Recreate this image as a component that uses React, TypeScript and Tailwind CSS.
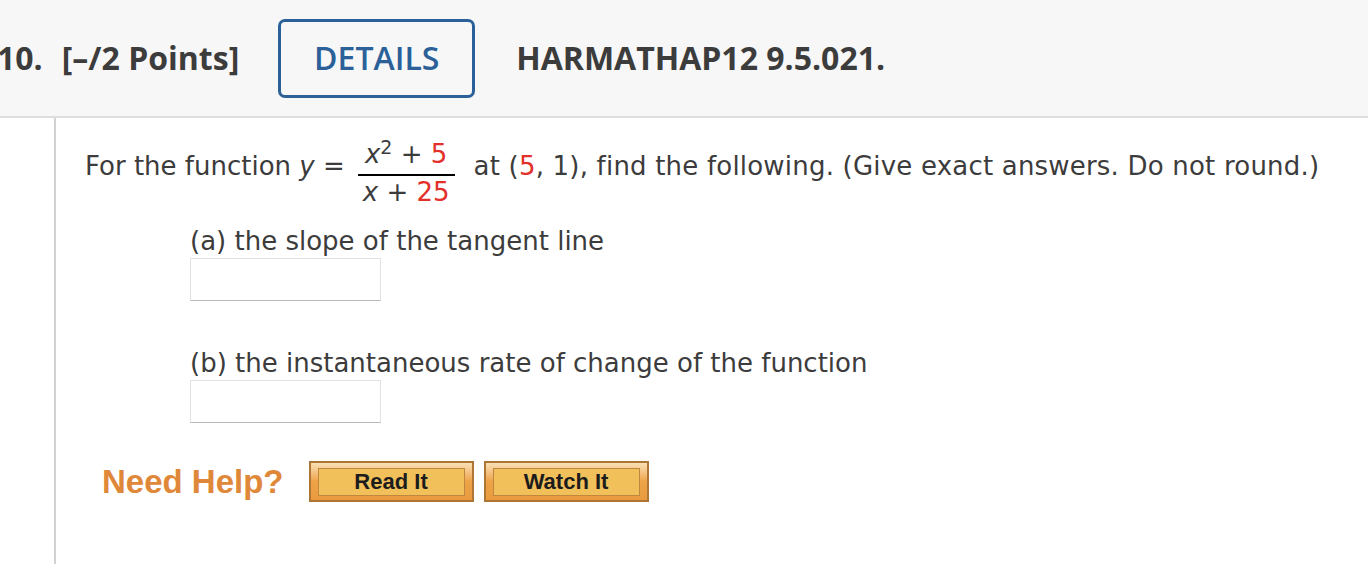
import React from "react";

const body = "font-['DejaVu_Sans',Verdana,sans-serif]";

function HelpButton({ label, className }: { label: string; className?: string }) {
  return (
    <button
      className={`h-[41px] w-[165px] border-2 border-[#ad7536] bg-gradient-to-b from-[#f9e0b4] via-[#eea347] to-[#e99a3e] pt-[5px] pb-[4px] px-[7px] ${className ?? ""}`}
    >
      <span className="flex h-full w-full items-center justify-center border border-[#c0883f] bg-[#f2c05b] font-['Liberation_Sans',Arial,sans-serif] text-[22px] font-bold leading-none text-[#1c1c1c]">
        {label}
      </span>
    </button>
  );
}

function AnswerBox() {
  return (
    <div className="h-[43px] w-[191px] border border-[#e2e2e2] border-b-[#b9b9b9] bg-white" />
  );
}

export default function App() {
  return (
    <div className="h-[564px] w-[1368px] overflow-hidden bg-white text-[#3c3c3c]">
      {/* question header */}
      <div className="flex h-[118px] items-center border-b-2 border-[#dedede] bg-[#f7f7f7] font-['Open_Sans',sans-serif] text-[32px] font-bold">
        <span className="ml-[-3px]">10.</span>
        <span className="ml-[19px]">[–/2 Points]</span>
        <div className="ml-[39px] flex h-[79px] w-[197px] items-center justify-center rounded-[7px] border-[3px] border-[#2b6198] font-semibold text-[#2b6198]">
          DETAILS
        </div>
        <span className="ml-[41px]">HARMATHAP12 9.5.021.</span>
      </div>

      <div className="flex h-[446px]">
        <div className="w-[54px] shrink-0" />
        <div className={`flex-1 border-l-2 border-[#d2d2d2] pl-[29px] ${body} text-[26px]`}>
          {/* prompt with fraction */}
          <div className="mt-[16px] flex items-start">
            <span className="mt-[13px] leading-[39px]">
              For the function <i>y</i> =
            </span>
            <span className="ml-[13px] mr-[19px] flex flex-col items-center">
              <span className="px-[5px] leading-[40px]">
                <i>x</i>
                <sup className="text-[19px]">2</sup> + <span className="text-[#e3302a]">5</span>
              </span>
              <span className="h-[2px] w-full bg-black" />
              <span className="px-[5px] leading-[32px]">
                <i>x</i> + <span className="text-[#e3302a]">25</span>
              </span>
            </span>
            <span className="mt-[13px] leading-[39px] tracking-[0.2px]">
              at (<span className="text-[#e3302a]">5</span>, 1), find the following. (Give exact answers. Do not round.)
            </span>
          </div>

          <div className="ml-[105px]">
            <p className="mt-[16px] leading-[34px]">(a) the slope of the tangent line</p>
            <AnswerBox />
            <p className="mt-[45px] leading-[34px]">(b) the instantaneous rate of change of the function</p>
            <AnswerBox />
          </div>

          <div className="ml-[17px] mt-[38px] flex items-center">
            <span className="font-['Liberation_Sans',Arial,sans-serif] text-[33px] font-bold leading-[38px] text-[#e0883a]">
              Need Help?
            </span>
            <HelpButton label="Read It" className="ml-[25px]" />
            <HelpButton label="Watch It" className="ml-[10px]" />
          </div>
        </div>
      </div>
    </div>
  );
}
